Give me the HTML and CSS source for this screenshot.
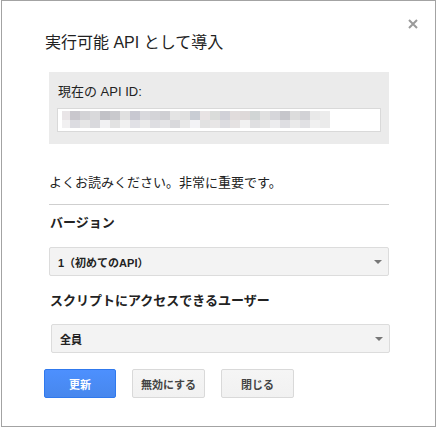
FILE: index.html
```html
<!DOCTYPE html>
<html lang="ja">
<head>
<meta charset="utf-8">
<title>実行可能 API として導入</title>
<link rel="stylesheet" href="styles.css">
</head>
<body>
<div class="dialog">
  <div class="header">
    <h1 class="title">実行可能 API として導入</h1>
    <button class="close" aria-label="閉じる">
      <svg width="10" height="10" viewBox="0 0 10 10"><path d="M1 1L9 9M9 1L1 9" stroke="#9a9a9a" stroke-width="2" fill="none"/></svg>
    </button>
  </div>
  <div class="content">
    <div class="idbox">
      <div class="idlabel">現在の API ID:</div>
      <div class="idinput"><div class="mosaic"></div></div>
    </div>
    <p class="notice">よくお読みください。非常に重要です。</p>
    <hr class="sep">
    <div class="field-label">バージョン</div>
    <div class="select">1（初めてのAPI）<span class="arrow"></span></div>
    <div class="field-label field-label-2">スクリプトにアクセスできるユーザー</div>
    <div class="select select-2">全員<span class="arrow"></span></div>
  </div>
  <div class="buttons">
    <button class="btn btn-primary">更新</button>
    <button class="btn">無効にする</button>
    <button class="btn">閉じる</button>
  </div>
</div>
</body>
</html>
```
FILE: styles.css
```css
* { box-sizing: border-box; }
html, body { margin: 0; padding: 0; background: #fff; }
body {
  font-family: "Liberation Sans", Arial, "Noto Sans CJK JP", sans-serif;
  color: #222;
}
.dialog {
  width: 435px;
  height: 427px;
  margin-left: 1px;
  border: 1px solid #a3a3a3;
  background: #fff;
}
.header {
  display: flex;
  justify-content: space-between;
  align-items: flex-start;
  padding: 18px 17px 0 43px;
}
.title {
  margin: 14px 0 0 0;
  font-size: 16px;
  line-height: 20px;
  font-weight: normal;
  color: #222;
}
.close {
  border: 0;
  padding: 0;
  background: none;
  width: 10px;
  height: 10px;
  display: block;
}
.close svg { display: block; }
.content {
  margin-left: 47px;
  width: 340px;
}
.idbox {
  margin-top: 19px;
  background: #ebebeb;
  padding: 12px 8px 12px 8px;
}
.idlabel {
  font-size: 13px;
  line-height: 16px;
  padding-left: 1px;
  color: #222;
}
.idinput {
  margin-top: 8px;
  height: 24px;
  background: #fff;
  border: 1px solid #d9d9d9;
  padding: 2px 0 0 4px;
}
.mosaic {
  width: 268px;
  height: 17px;
  background:
    linear-gradient(90deg,
      #e9e5e7 0 8px, #c9c7cd 8px 18px, #d3d3d6 18px 28px, #d9d9db 28px 38px,
      #c2c2c7 38px 48px, #c9c9cd 48px 58px, #e0e0e0 58px 68px, #c8c8d1 68px 78px,
      #d9d9dd 78px 88px, #d4d4d8 88px 98px, #cfcfd3 98px 108px, #e4e4e4 108px 118px,
      #e0e0e0 118px 128px, #c9cdd4 128px 138px, #e8e3e4 138px 148px, #dadcda 148px 158px,
      #d1d1d8 158px 168px, #e1dcdc 168px 178px, #ded9d9 178px 188px, #d1d5d5 188px 198px,
      #e0e0e0 198px 208px, #d6d6da 208px 218px, #c6c6cb 218px 228px, #dcdcdc 228px 238px,
      #d2d2d6 238px 248px, #e9e9e9 248px 258px, #ececec 258px 268px) top / 100% 9px no-repeat,
    linear-gradient(90deg,
      #f1f0f1 0 8px, #dcdce1 8px 18px, #e6e6e6 18px 28px, #d9d9dd 28px 38px,
      #f1f1f3 38px 48px, #e2e2e2 48px 58px, #f0f0f0 58px 68px, #e1e1e6 68px 78px,
      #eaeaea 78px 88px, #dedee2 88px 98px, #e4e4e6 98px 108px, #d9d9dc 108px 118px,
      #e8e8e8 118px 128px, #f3f3f6 128px 138px, #e2e2e2 138px 148px, #e8e6e6 148px 158px,
      #dcdce0 158px 168px, #e5e2e2 168px 178px, #f1f1f1 178px 188px, #dfdfe1 188px 198px,
      #e5e5e5 198px 208px, #ececee 208px 218px, #dedee2 218px 228px, #eaeaea 228px 238px,
      #e1e1e4 238px 248px, #f0f0f0 248px 258px, #ebebeb 258px 268px) bottom / 100% 8px no-repeat;
}
.notice {
  margin: 31px 0 0 0;
  font-size: 13px;
  line-height: 16px;
}
.sep {
  margin: 13px 0 0 0;
  border: 0;
  height: 1px;
  background: #cfcfcf;
}
.field-label {
  margin-top: 10px;
  font-size: 13px;
  line-height: 16px;
  font-weight: bold;
  padding-left: 1px;
}
.field-label-2 { margin-top: 17px; }
.select {
  margin-top: 16px;
  height: 29px;
  display: flex;
  align-items: center;
  justify-content: space-between;
  padding: 0 6px 0 8px;
  background: #f3f3f3;
  border: 1px solid #dcdcdc;
  border-radius: 2px;
  font-size: 11px;
  font-weight: bold;
  color: #222;
}
.select-2 {
  margin-top: 15px;
  margin-left: 2px;
  width: 339px;
}
.arrow {
  width: 0;
  height: 0;
  border-left: 4px solid transparent;
  border-right: 4px solid transparent;
  border-top: 4px solid #777;
}
.buttons {
  display: flex;
  gap: 16px;
  margin: 16px 0 0 42px;
}
.btn {
  width: 73px;
  height: 29px;
  padding: 0;
  border: 1px solid #d9d9d9;
  border-radius: 2px;
  background: linear-gradient(#f5f5f5, #f1f1f1);
  font-family: inherit;
  font-size: 11px;
  font-weight: bold;
  color: #444;
}
.btn-primary {
  width: 72px;
  border-color: #3079ed;
  background: linear-gradient(#4d90fe, #4787ed);
  color: #fff;
}
```
